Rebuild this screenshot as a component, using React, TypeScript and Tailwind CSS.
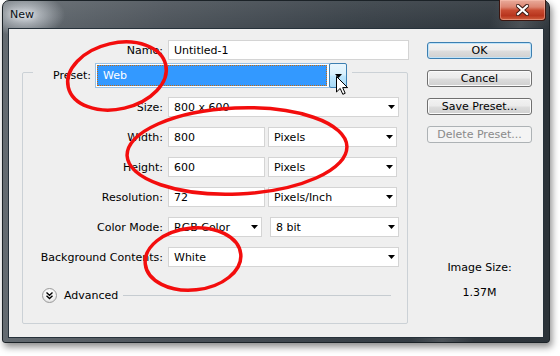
import React from "react";

function Tri() {
  return (
    <svg width="7" height="4" viewBox="0 0 7 4" className="shrink-0">
      <path d="M0 0H7L3.5 4Z" fill="#000" />
    </svg>
  );
}

function Field({ cls, text }: { cls: string; text: string }) {
  return (
    <div className={"h-[20px] bg-white border border-[#d4d4d4] flex items-center pl-[5px] " + cls}>
      {text}
    </div>
  );
}

function Select({ cls, text }: { cls: string; text: string }) {
  return (
    <div className={"h-[20px] bg-white border border-[#d4d4d4] flex items-center justify-between pl-[5px] pr-[3px] " + cls}>
      <span>{text}</span>
      <Tri />
    </div>
  );
}

function Row({ label, children }: { label: string; children: React.ReactNode }) {
  return (
    <div className="flex items-center h-[20px]">
      <div className="w-[140px] text-right whitespace-nowrap">{label}</div>
      <div className="ml-[5px] flex items-center gap-[5px]">{children}</div>
    </div>
  );
}

function Btn({ text, kind }: { text: string; kind?: "default" | "disabled" }) {
  if (kind === "default") {
    return (
      <div className="h-[17px] rounded-[3px] border border-[#3c7fb1] shadow-[inset_0_0_0_1px_#bfe3f9] bg-[linear-gradient(180deg,#f4f4f4_0%,#ececec_48%,#dddddd_52%,#d0d0d0_100%)] flex items-center justify-center">
        {text}
      </div>
    );
  }
  if (kind === "disabled") {
    return (
      <div className="h-[17px] rounded-[3px] border border-[#adb2b5] bg-[#f4f4f4] text-[#8a8a8a] flex items-center justify-center">
        {text}
      </div>
    );
  }
  return (
    <div className="h-[17px] rounded-[3px] border border-[#707070] shadow-[inset_0_0_0_1px_#fbfbfb] bg-[linear-gradient(180deg,#f2f2f2_0%,#ebebeb_48%,#dddddd_52%,#cfcfcf_100%)] flex items-center justify-center">
      {text}
    </div>
  );
}

export default function App() {
  return (
    <div className="relative w-[560px] h-[356px] bg-white overflow-hidden font-['DejaVu_Sans',sans-serif] text-[11px] leading-[13px] text-black">
      <div className="ml-[2px] w-[548px] h-[343px] flex flex-col border border-[#1b2227] rounded-t-[7px] rounded-b-[3px] px-[5px] pb-[4px] shadow-[2px_4px_7px_rgba(0,0,0,0.45)] [background:radial-gradient(ellipse_40px_22px_at_22px_14px,rgba(215,220,226,0.95),rgba(215,220,226,0)),linear-gradient(104deg,rgba(255,255,255,0)_78%,rgba(255,255,255,0.13)_83%,rgba(255,255,255,0)_88%),linear-gradient(180deg,rgba(255,255,255,0.08)_0px,rgba(255,255,255,0)_28px),linear-gradient(90deg,#646b71_0%,#4c535a_30%,#384047_65%,#2c3339_100%)]">
        {/* title bar */}
        <div className="h-[27px] -mx-[5px] pl-[7px] pr-[3px] flex justify-between items-start">
          <div className="self-center text-[11px] text-[#0b1016] [text-shadow:0_0_6px_rgba(255,255,255,0.9)]">New</div>
          <div className="-mt-px w-[47px] h-[21px] rounded-b-[4px] border border-t-0 border-[#3b1610] shadow-[inset_0_0_0_1px_rgba(255,200,185,0.45)] bg-[linear-gradient(180deg,#e9ab9b_0%,#dc8571_35%,#c84b31_52%,#b8351d_78%,#d0603f_100%)] flex items-center justify-center">
            <svg width="13" height="12" viewBox="0 0 13 12">
              <path d="M2 2L11 10M11 2L2 10" stroke="#3a1710" strokeWidth="4.2" strokeLinecap="square" />
              <path d="M2 2L11 10M11 2L2 10" stroke="#ffffff" strokeWidth="2.3" strokeLinecap="square" />
            </svg>
          </div>
        </div>

        {/* client */}
        <div className="flex-1 border border-[#26313a] bg-[#efefef] flex">
          {/* left column */}
          <div className="w-[401px] pl-[13px] pt-[11px] flex flex-col">
            <div className="flex items-center h-[20px]">
              <div className="w-[141px] text-right">Name:</div>
              <Field cls="ml-[5px] w-[241px]" text="Untitled-1" />
            </div>

            <fieldset className="mt-[-4px] w-[386px] h-[268px] min-w-0 border border-[#cbd1d6] rounded-[2px]">
              <legend className="ml-[10px] pl-[20px] pr-[5px] pt-[7px]">
                <div className="flex items-center">
                  <span>Preset:</span>
                  <div className="ml-[4px] w-[252px] h-[25px] flex">
                    <div className="flex-1 border border-[#9cc3e6] bg-white p-[1px] pr-[2px]">
                      <div className="h-full bg-[#3399ff] border border-dotted border-[#c46a10] text-white flex items-center pl-[5px]">
                        Web
                      </div>
                    </div>
                    <div className="w-[18px] -ml-px border border-[#3c7fb1] rounded-[2px] bg-[linear-gradient(180deg,#eaf6fd_0%,#d9f0fc_45%,#bee6fd_55%,#a7d9f5_100%)] flex items-center justify-center">
                      <Tri />
                    </div>
                  </div>
                </div>
              </legend>

              <div className="pt-[9px] flex flex-col gap-[10px]">
                <Row label="Size:">
                  <Select cls="w-[231px]" text="800 x 600" />
                </Row>
                <Row label="Width:">
                  <Field cls="w-[97px]" text="800" />
                  <Select cls="w-[129px] ml-[-2px]" text="Pixels" />
                </Row>
                <Row label="Height:">
                  <Field cls="w-[97px]" text="600" />
                  <Select cls="w-[129px] ml-[-2px]" text="Pixels" />
                </Row>
                <Row label="Resolution:">
                  <Field cls="w-[97px]" text="72" />
                  <Select cls="w-[129px] ml-[-2px]" text="Pixels/Inch" />
                </Row>
                <Row label="Color Mode:">
                  <Select cls="w-[94px]" text="RGB Color" />
                  <Select cls="w-[129px] ml-[3px]" text="8 bit" />
                </Row>
                <Row label="Background Contents:">
                  <Select cls="w-[231px]" text="White" />
                </Row>

                <div className="mt-[10px] flex items-center h-[16px]">
                  <div className="ml-[19px] w-[15px] h-[15px] rounded-full border border-[#9a9a9a] bg-[radial-gradient(circle_at_50%_35%,#ffffff_0%,#f3f3f3_55%,#d2d2d2_100%)] flex items-center justify-center">
                    <svg width="9" height="9" viewBox="0 0 9 9">
                      <path d="M1.5 1.5L4.5 4.2L7.5 1.5M1.5 4.8L4.5 7.5L7.5 4.8" stroke="#000" strokeWidth="1.4" fill="none" />
                    </svg>
                  </div>
                  <span className="ml-[7px]">Advanced</span>
                  <div className="ml-[5px] mr-[16px] flex-1 h-px bg-[#c6ccd1]" />
                </div>
              </div>
            </fieldset>
          </div>

          {/* right column */}
          <div className="w-[122px] pl-[17px] pt-[13px] flex flex-col">
            <div className="flex flex-col gap-[11px]">
              <Btn text="OK" kind="default" />
              <Btn text="Cancel" />
              <Btn text="Save Preset..." />
              <Btn text="Delete Preset..." kind="disabled" />
            </div>
            <div className="mt-[118px] text-center">Image Size:</div>
            <div className="mt-[12px] text-center">1.37M</div>
          </div>
        </div>
      </div>

      {/* annotations */}
      <svg className="absolute inset-0 pointer-events-none" width="560" height="356" viewBox="0 0 560 356">
        <g transform="translate(336,76)">
          <path d="M0.5 0.5V16L4.2 12.4L6.8 18.3L9.2 17.3L6.7 11.6L11.6 11.6Z" fill="#fff" stroke="#000" strokeWidth="1" strokeLinejoin="round" />
        </g>
        <ellipse cx="117" cy="76" rx="50" ry="33" transform="rotate(-13 117 76)" fill="none" stroke="#f30d0d" strokeWidth="3.5" />
        <ellipse cx="237" cy="151" rx="110" ry="43" transform="rotate(-2.5 237 151)" fill="none" stroke="#f30d0d" strokeWidth="3.5" />
        <ellipse cx="193" cy="259" rx="48" ry="31" transform="rotate(-6 193 259)" fill="none" stroke="#f30d0d" strokeWidth="3.5" />
      </svg>
    </div>
  );
}
